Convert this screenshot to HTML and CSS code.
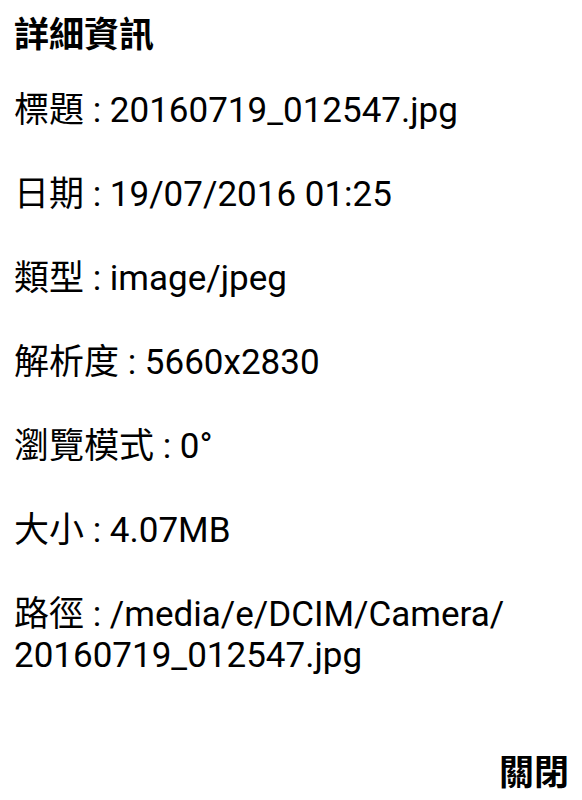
FILE: index.html
```html
<!DOCTYPE html>
<html lang="zh-Hant">
<head>
<meta charset="utf-8">
<title>詳細資訊</title>
<link rel="stylesheet" href="styles.css">
</head>
<body>
<div class="dialog">
  <h1 class="dialog-title">詳細資訊</h1>
  <div class="details">
    <p class="row">標題 : 20160719_012547.jpg</p>
    <p class="row">日期 : 19/07/2016 01:25</p>
    <p class="row">類型 : image/jpeg</p>
    <p class="row">解析度 : 5660x2830</p>
    <p class="row">瀏覽模式 : 0°</p>
    <p class="row">大小 : 4.07MB</p>
    <p class="row">路徑 : /media/e/DCIM/Camera/<wbr>20160719_012547.jpg</p>
  </div>
  <div class="actions">
    <button class="btn-close" type="button">關閉</button>
  </div>
</div>
</body>
</html>
```

FILE: styles.css
```css
html, body {
  margin: 0;
  padding: 0;
  background: #fff;
}
body {
  font-family: "Roboto", "Noto Sans CJK TC", sans-serif;
  color: #000;
}
.dialog {
  width: 582px;
  height: 800px;
  box-sizing: border-box;
  padding: 0 13px 0 14px;
  display: flex;
  flex-direction: column;
}
.dialog-title {
  margin: 0;
  font-size: 35px;
  font-weight: 700;
  line-height: 41px;
  padding-top: 15px;
}
.details {
  padding-top: 34px;
  display: flex;
  flex-direction: column;
  gap: 43px;
}
.row {
  margin: 0;
  font-size: 35px;
  line-height: 41px;
}
.actions {
  margin-top: auto;
  display: flex;
  justify-content: flex-end;
  padding-bottom: 6px;
}
.btn-close {
  font-family: "Roboto", "Noto Sans CJK TC", sans-serif;
  font-size: 35px;
  font-weight: 700;
  line-height: 41px;
  color: #000;
  background: none;
  border: 0;
  padding: 0;
  margin: 0;
}
```
